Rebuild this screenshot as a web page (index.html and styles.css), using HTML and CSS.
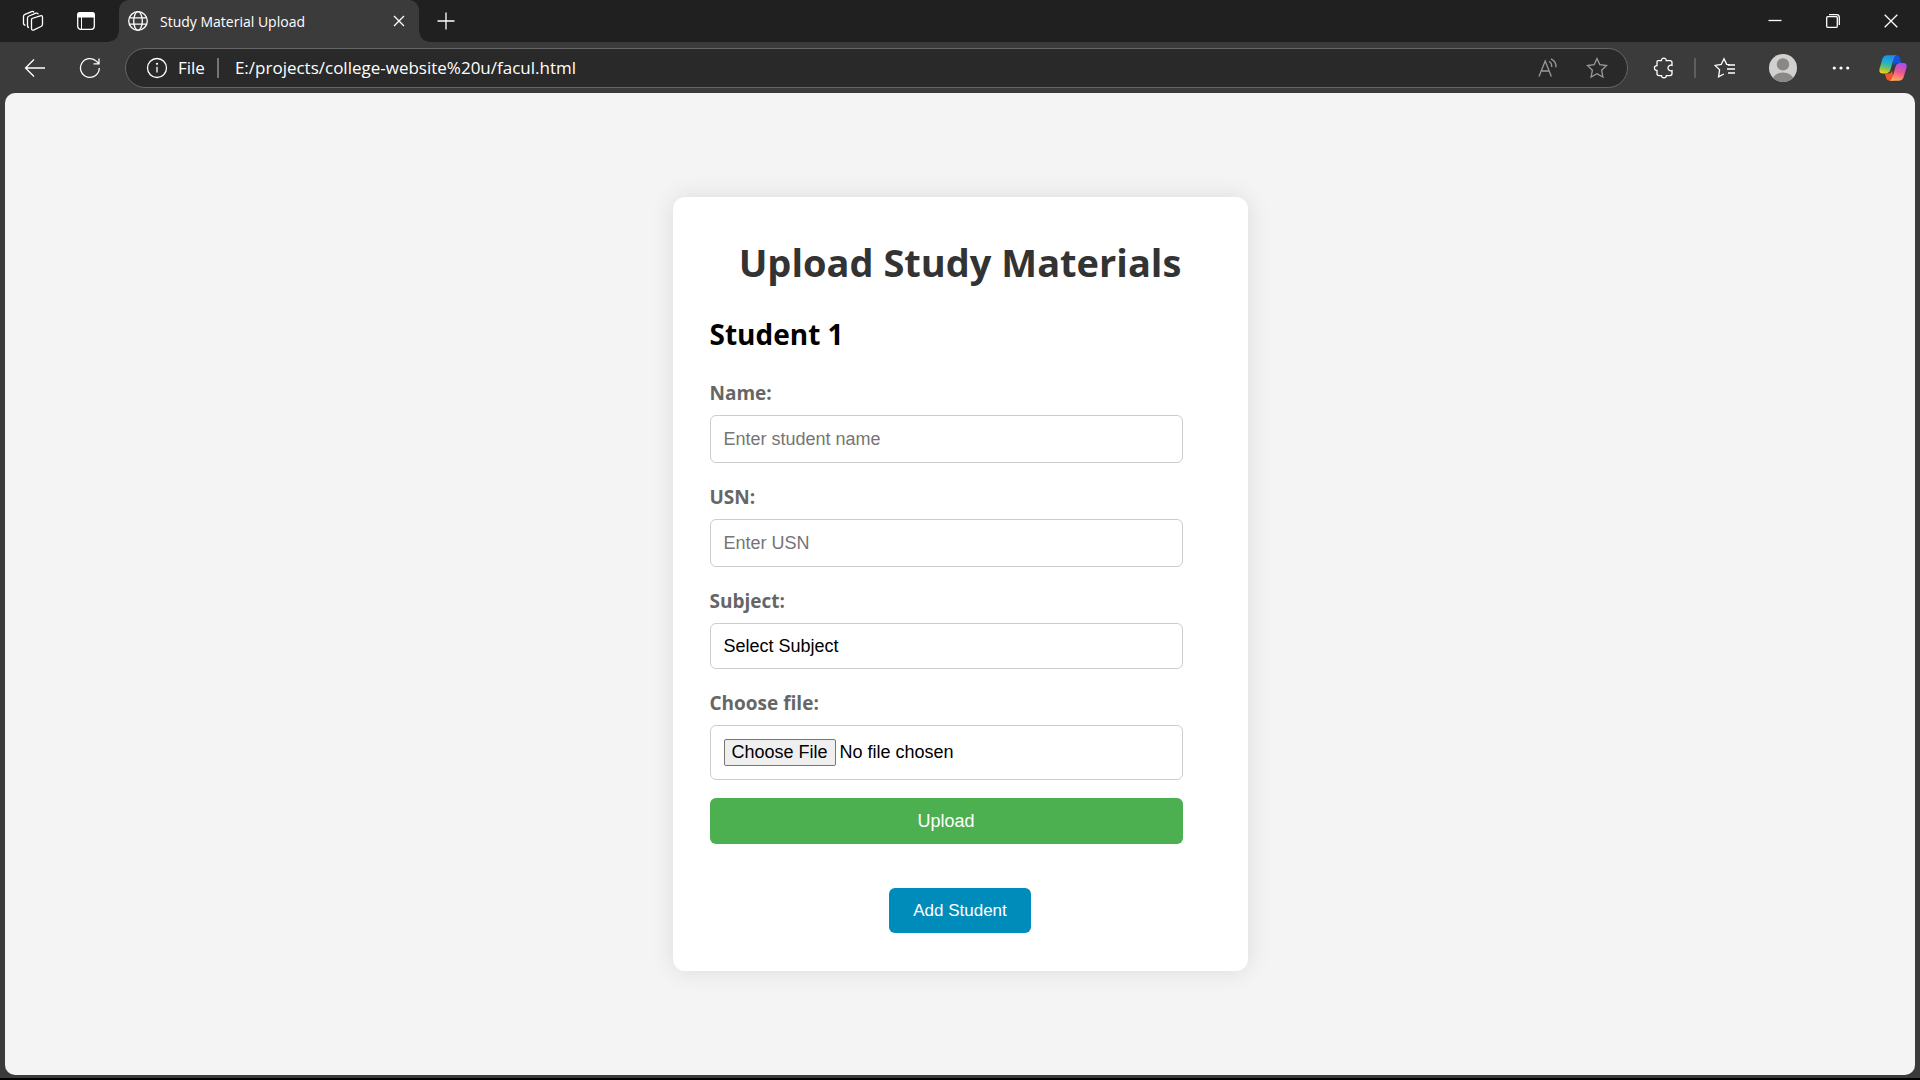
FILE: index.html
```
<!DOCTYPE html>
<html lang="en">
<head>
  <meta charset="UTF-8">
  <meta name="viewport" content="width=device-width, initial-scale=1.0">
  <title>Study Material Upload</title>
  <link rel="stylesheet" href="styles.css">
</head>
<body>
  <header class="titlebar">
    <button class="icon-btn" aria-label="Workspaces">
      <svg width="22" height="22" viewBox="0 0 22 22">
        <path d="M10 8.5 L18.2 5.8 Q20.5 5.2 20.5 7.2 V14.2 Q20.5 15.8 19 16.5 L12 19.8 Q9.5 20.8 9.5 18.5 V10 Q9.5 9 10 8.5 Z"/>
        <path d="M7 17.5 Q5.5 17.5 5.5 15.5 V8 Q5.5 6.5 7 6 L14 3.2 Q16 2.6 16.2 4.4"/>
        <path d="M3.5 15.2 Q1.5 15.2 1.5 13.2 V6.5 Q1.5 5 3 4.4 L9.6 1.6 Q11.4 1 12 2.4"/>
      </svg>
    </button>
    <button class="icon-btn" aria-label="Tab actions">
      <svg width="20" height="20" viewBox="0 0 20 20">
        <rect x="1.7" y="1.7" width="16.6" height="16.6" rx="3"/>
        <path class="solid" d="M1 6.5 V4 Q1 1 4 1 H16 Q19 1 19 4 V6.5 Z"/>
        <path class="thin" d="M5.5 6 V18"/>
      </svg>
    </button>
    <div class="tab">
      <svg width="22" height="22" viewBox="0 0 22 22">
        <circle cx="11" cy="11" r="9.3"/>
        <ellipse cx="11" cy="11" rx="4.3" ry="9.3"/>
        <path d="M2.5 7.8 H19.5 M2.5 14.2 H19.5"/>
      </svg>
      <span class="tab-title">Study Material Upload</span>
      <button class="tab-close" aria-label="Close tab">
        <svg width="12" height="12" viewBox="0 0 12 12"><path d="M1 1 L11 11 M11 1 L1 11"/></svg>
      </button>
    </div>
    <button class="icon-btn" aria-label="New tab">
      <svg width="18" height="18" viewBox="0 0 18 18"><path d="M9 .5 V17.5 M.5 9 H17.5"/></svg>
    </button>
    <div class="window-controls">
      <button aria-label="Minimize">
        <svg width="14" height="14" viewBox="0 0 14 14"><path d="M.5 6.5 H13.5"/></svg>
      </button>
      <button aria-label="Restore">
        <svg width="14" height="14" viewBox="0 0 14 14">
          <rect x=".7" y="2.7" width="10.6" height="10.6" rx="1"/>
          <path d="M3 .7 H10.5 Q13.3 .7 13.3 3.5 V11"/>
        </svg>
      </button>
      <button aria-label="Close">
        <svg width="14" height="14" viewBox="0 0 14 14"><path d="M.7 .7 L13.3 13.3 M13.3 .7 L.7 13.3"/></svg>
      </button>
    </div>
  </header>

  <nav class="toolbar">
    <button class="nav-btn" aria-label="Back">
      <svg width="22" height="22" viewBox="0 0 22 22"><path d="M21 11 H1.5 M10 2.5 L1.5 11 L10 19.5"/></svg>
    </button>
    <button class="nav-btn" aria-label="Refresh">
      <svg width="22" height="22" viewBox="0 0 22 22"><path d="M20.3 11 A9.4 9.4 0 1 1 17.6 4.4 L19.8 6.6 M20 1.5 V6.8 H14.5"/></svg>
    </button>
    <div class="address-bar">
      <svg width="22" height="22" viewBox="0 0 22 22">
        <circle cx="11" cy="11" r="9.5"/>
        <path d="M11 9.8 V15.5"/>
        <circle class="solid" cx="11" cy="6.8" r="1.1"/>
      </svg>
      <span class="scheme">File</span>
      <input class="url" type="text" aria-label="Address" value="E:/projects/college-website%20u/facul.html">
      <button class="bar-btn" aria-label="Read aloud">
        <svg width="22" height="22" viewBox="0 0 22 22">
          <path d="M2 19.5 L8.2 4 L14.3 19.5 M4.2 14 H12.2"/>
          <path d="M12 4.2 Q15 6 14.7 10 M14 1.8 Q19.6 4.5 18.9 10.4"/>
        </svg>
      </button>
      <button class="bar-btn" aria-label="Add to favorites">
        <svg width="22" height="22" viewBox="0 0 22 22">
          <path d="M11 1.6 L13.8 7.6 L20.5 8.5 L15.6 13.2 L16.9 20 L11 16.7 L5.1 20 L6.4 13.2 L1.5 8.5 L8.2 7.6 Z"/>
        </svg>
      </button>
    </div>
    <button class="tool-btn extensions" aria-label="Extensions">
      <svg width="22" height="22" viewBox="0 0 22 22">
        <path d="M4.6 3.6 H8.4 C8.2 2.2 9.4 1.2 10.8 1.2 C12.3 1.2 13.4 2.2 13.2 3.6 H17 Q19 3.6 19 5.6 V8.3 C16.8 7.7 15 9 15 11 C15 13 16.8 14.3 19 13.7 V16.6 Q19 18.6 17 18.6 H13.3 C13.4 20 12.4 20.9 11 20.9 C9.5 20.9 8.5 20 8.6 18.6 H6 Q4 18.6 4 16.6 V13.5 C2.4 13.5 1.4 12.5 1.4 11 C1.4 9.6 2.4 8.6 4 8.6 V5.2 Q4 3.6 5 3.6"/>
      </svg>
    </button>
    <span class="divider"></span>
    <button class="tool-btn" aria-label="Favorites">
      <svg width="22" height="22" viewBox="0 0 22 22">
        <path d="M15.8 7.8 L12.7 7.3 L10 1.8 L7.2 7.5 L1 8.4 L5.6 12.8 L4.6 19.8 L9.8 17"/>
        <path d="M14 8 H21 M13 12 H21 M14 16 H21"/>
      </svg>
    </button>
    <button class="tool-btn" aria-label="Profile">
      <svg width="28" height="28" viewBox="0 0 28 28">
        <clipPath id="avatar"><circle cx="14" cy="14" r="14"/></clipPath>
        <g clip-path="url(#avatar)" stroke="none">
          <rect width="28" height="28" fill="#d2d0ce"/>
          <circle cx="14" cy="10.4" r="6.2" fill="#8a8886"/>
          <ellipse cx="14" cy="26" rx="10.5" ry="7.5" fill="#8a8886"/>
        </g>
      </svg>
    </button>
    <button class="tool-btn" aria-label="Settings and more">
      <svg class="dots" width="20" height="4" viewBox="0 0 20 4">
        <circle cx="3.3" cy="2" r="1.6"/><circle cx="10" cy="2" r="1.6"/><circle cx="16.7" cy="2" r="1.6"/>
      </svg>
    </button>
    <button class="copilot" aria-label="Copilot">
      <svg class="logo" width="28" height="28" viewBox="0 0 28 28">
        <defs>
          <linearGradient id="cool" x1=".5" y1="0" x2=".3" y2="1">
            <stop offset="0" stop-color="#1a8df0"/>
            <stop offset=".45" stop-color="#27b3c4"/>
            <stop offset=".75" stop-color="#84c44c"/>
            <stop offset="1" stop-color="#f6ce18"/>
          </linearGradient>
          <linearGradient id="warm" x1=".7" y1="0" x2=".4" y2="1">
            <stop offset="0" stop-color="#a74df0"/>
            <stop offset=".5" stop-color="#ef5590"/>
            <stop offset="1" stop-color="#ffab5c"/>
          </linearGradient>
        </defs>
        <path fill="#1b50d8" d="M13 1.2 H17.6 Q20 1.2 20.8 3.8 L22.3 9 H18.4 Q15.7 9 14.7 12 Z"/>
        <path fill="#f0562e" d="M15 26.8 H10.8 Q8 26.8 7.2 24 L5.8 19.4 H9.8 Q12.2 19.4 13.1 16.6 Z"/>
        <path fill="url(#cool)" d="M8.4 1.2 H17.8 Q15.5 1.6 14.6 4.8 L11.5 15.6 Q10.4 19.4 6.8 19.4 H4 Q-.7 19.4 .6 14.5 L3.4 5 Q4.6 1.2 8.4 1.2 Z"/>
        <path fill="url(#warm)" d="M19.6 26.8 H10.3 Q12.6 26.4 13.5 23.2 L16.5 12.7 Q17.6 9 21.2 9 H24.2 Q28.7 9 27.4 13.7 L24.7 23 Q23.5 26.8 19.6 26.8 Z"/>
      </svg>
    </button>
  </nav>

  <main class="page">
    <div class="container">
      <h1>Upload Study Materials</h1>
      <form class="student">
        <h2>Student 1</h2>
        <label for="name">Name:</label>
        <input type="text" id="name" placeholder="Enter student name">
        <label for="usn">USN:</label>
        <input type="text" id="usn" placeholder="Enter USN">
        <label for="subject">Subject:</label>
        <select id="subject">
          <option>Select Subject</option>
        </select>
        <label for="file">Choose file:</label>
        <input type="file" id="file">
        <button class="upload-btn" type="button">Upload</button>
      </form>
      <button class="add-btn" type="button">Add Student</button>
    </div>
  </main>
</body>
</html>
```
FILE: styles.css
```
* {
  box-sizing: border-box;
}
body {
  margin: 0;
  min-height: 100vh;
  display: flex;
  flex-direction: column;
  background: #3b3b3b;
  border-bottom: 2px solid #000;
  font-family: "Segoe UI", "Open Sans", sans-serif;
}
button {
  border: none;
  padding: 0;
  background: none;
  font-family: "Liberation Sans", Arial, sans-serif;
}
svg {
  display: block;
  flex: none;
  fill: none;
  stroke: #fff;
  stroke-width: 1.3;
}
.solid {
  fill: #fff;
  stroke: none;
}
.thin {
  stroke-width: 1;
}

/* browser window */
.titlebar {
  display: flex;
  height: 42px;
  padding-left: 6px;
  background: #202020;
}
.icon-btn,
.window-controls button,
.nav-btn,
.tool-btn,
.copilot,
.bar-btn {
  display: flex;
  align-items: center;
  justify-content: center;
}
.icon-btn {
  width: 53px;
}
.tab {
  position: relative;
  display: flex;
  align-items: center;
  width: 300px;
  margin-left: 7px;
  padding: 0 12px 0 8px;
  background: #3b3b3b;
  border-radius: 10px 10px 0 0;
  color: #fff;
  font-size: 14px;
}
/* curved feet of the active tab */
.tab::before,
.tab::after {
  content: "";
  position: absolute;
  bottom: 0;
  width: 10px;
  height: 10px;
}
.tab::before {
  left: -10px;
  background: radial-gradient(circle at 0 0, #202020 9px, #3b3b3b 10px);
}
.tab::after {
  right: -10px;
  background: radial-gradient(circle at 100% 0, #202020 9px, #3b3b3b 10px);
}
.tab-title {
  flex: 1;
  margin-left: 11px;
}
.tab-close {
  padding: 2px;
}
.window-controls {
  display: flex;
  margin-left: auto;
}
.window-controls button {
  width: 58px;
}
.toolbar {
  display: flex;
  align-items: center;
  height: 51px;
  padding: 0 4px 0 7px;
}
.nav-btn {
  width: 55px;
}
.address-bar {
  flex: 1;
  display: flex;
  align-items: center;
  height: 40px;
  margin-left: 8px;
  padding: 0 6px 0 20px;
  background: #292929;
  border: 1px solid #666;
  border-radius: 20px;
  color: #fff;
  font-size: 17px;
}
.scheme {
  margin-left: 10px;
  padding-right: 12px;
  border-right: 2px solid #757575;
  line-height: 20px;
}
.url {
  flex: 1;
  padding: 0 0 0 16px;
  border: none;
  outline: none;
  background: none;
  color: #fff;
  font: inherit;
}
.bar-btn {
  width: 49px;
}
.bar-btn svg {
  stroke: #9a9a9a;
}
.tool-btn {
  width: 58px;
}
.extensions {
  width: 60px;
  margin-left: 6px;
}
.divider {
  width: 2px;
  height: 20px;
  background: #5e5e5e;
}
.dots {
  fill: #fff;
  stroke: none;
}
.copilot {
  width: 46px;
}
.logo {
  stroke: none;
}

/* upload page */
.page {
  flex: 1;
  display: flex;
  align-items: center;
  justify-content: center;
  margin: 0 5px 3px;
  background: #f4f4f4;
  border-radius: 10px;
}
.container {
  width: 575px;
  padding: 39px 37px 38px;
  background: #fff;
  border-radius: 12px;
  box-shadow: 0 0 25px rgba(0, 0, 0, 0.1);
  text-align: center;
}
h1 {
  margin: 0 0 25px;
  color: #333;
  font-size: 38px;
  line-height: 53px;
  white-space: nowrap;
}
.student {
  width: 473px;
  text-align: left;
}
h2 {
  margin: 0 0 26px;
  font-size: 28px;
  line-height: 40px;
}
label {
  display: block;
  margin-bottom: 8px;
  color: #666;
  font-size: 19px;
  font-weight: bold;
  line-height: 27px;
}
.student input,
.student select {
  display: block;
  width: 100%;
  height: 48px;
  margin: 0 0 21px;
  padding: 0 13px;
  background: #fff;
  border: 1px solid #ccc;
  border-radius: 6px;
  color: #000;
  font-family: "Liberation Sans", Arial, sans-serif;
  font-size: 18px;
}
.student select {
  height: 46px;
  appearance: none;
}
.student input::placeholder {
  color: #757575;
}
.student input[type="file"] {
  height: 55px;
  margin-bottom: 18px;
  padding: 13px;
}
.student input::file-selector-button {
  height: 27px;
  margin-right: 4px;
  padding: 0 7px;
  background: #efefef;
  border: 1px solid #767676;
  border-radius: 2px;
  font: inherit;
}
.upload-btn {
  display: block;
  width: 100%;
  height: 46px;
  background: #4caf50;
  border-radius: 6px;
  color: #fff;
  font-size: 18px;
}
.add-btn {
  height: 45px;
  margin-top: 44px;
  padding: 0 24px;
  background: #008cba;
  border-radius: 6px;
  color: #fff;
  font-size: 17px;
  vertical-align: top;
}
```
